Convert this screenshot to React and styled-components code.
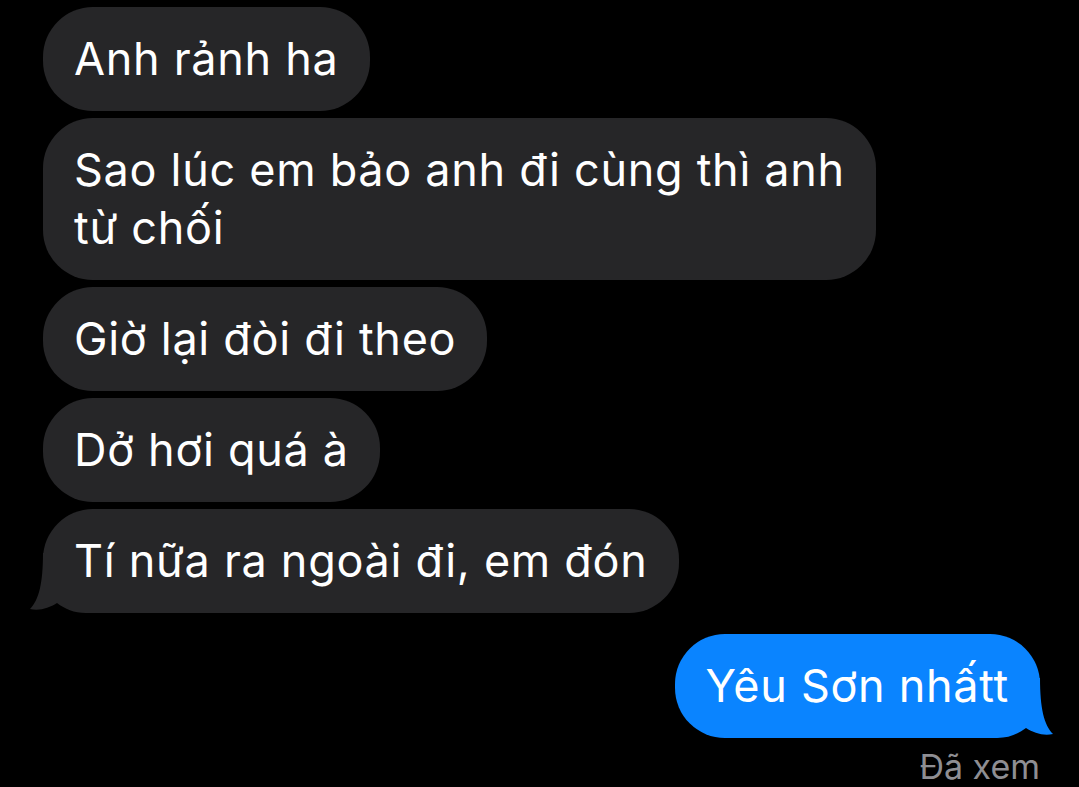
import React from "react";
import styled, { createGlobalStyle } from "styled-components";

const GlobalStyle = createGlobalStyle`
  html, body {
    margin: 0;
    padding: 0;
    background: #000;
  }
  body {
    font-family: Inter, "Noto Sans", "Liberation Sans", sans-serif;
    -webkit-font-smoothing: antialiased;
  }
`;

const Thread = styled.div`
  display: flex;
  flex-direction: column;
  padding: 7px 39px 0 43px;
  min-height: 787px;
  box-sizing: border-box;
  background: #000;
`;

const Group = styled.div`
  display: flex;
  flex-direction: column;
  align-items: ${(p) => (p.$sent ? "flex-end" : "flex-start")};
  gap: 7px;
  margin-top: ${(p) => p.$gap || 0}px;
`;

const Bubble = styled.div`
  position: relative;
  box-sizing: border-box;
  padding: 23px 31px;
  border-radius: 50px;
  font-size: 45px;
  line-height: 58px;
  letter-spacing: 0.7px;
  color: #fff;
  background: ${(p) => (p.$sent ? "#0a84ff" : "#262628")};
  white-space: nowrap;
`;

const Text = styled.span`
  position: relative;
  z-index: 1;
`;

const TailSvg = styled.svg`
  position: absolute;
  bottom: 0;
  width: 70px;
  height: 60px;
  ${(p) => (p.$sent ? "right: -13px; transform: scaleX(-1);" : "left: -13px;")}
`;

const ReadReceipt = styled.div`
  align-self: flex-end;
  margin-top: 14px;
  font-size: 34px;
  line-height: 30px;
  color: #8e8e93;
`;

function Tail({ sent }) {
  return (
    <TailSvg $sent={sent} viewBox="0 0 70 60" aria-hidden="true">
      <path
        d="M13 0 C13 30 9 47 0 56 C10 58 19 55 27 50 C35 56 44 60 56 60 L70 60 L70 0 Z"
        fill={sent ? "#0a84ff" : "#262628"}
      />
    </TailSvg>
  );
}

function Message({ sent, tail, children }) {
  return (
    <Bubble $sent={sent}>
      {tail && <Tail sent={sent} />}
      <Text>{children}</Text>
    </Bubble>
  );
}

export default function App() {
  return (
    <>
      <GlobalStyle />
      <Thread>
        <Group>
          <Message>Anh rảnh ha</Message>
          <Message>
            Sao lúc em bảo anh đi cùng thì anh
            <br />
            từ chối
          </Message>
          <Message>Giờ lại đòi đi theo</Message>
          <Message>Dở hơi quá à</Message>
          <Message tail>Tí nữa ra ngoài đi, em đón</Message>
        </Group>
        <Group $sent $gap={21}>
          <Message sent tail>
            Yêu Sơn nhấtt
          </Message>
        </Group>
        <ReadReceipt>Đã xem</ReadReceipt>
      </Thread>
    </>
  );
}
